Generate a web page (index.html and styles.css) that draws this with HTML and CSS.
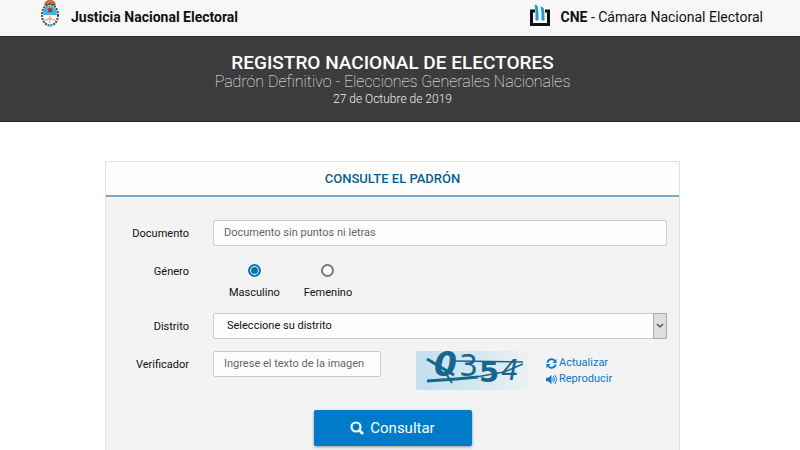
FILE: index.html
```
<!DOCTYPE html>
<html lang="es">

<head>
    <meta charset="UTF-8">
    <meta name="viewport" content="width=device-width, initial-scale=1.0">
    <title>Registro Nacional de Electores</title>
    <link rel="stylesheet" href="styles.css">
</head>

<body>
    <header class="topbar">
        <div class="brand">
            <svg class="brand-shield" viewBox="0 0 20 28" aria-hidden="true">
                <path d="M4 5Q5 0 10 0Q15 0 16 5Q10 8 4 5Z" fill="#b5673a" />
                <path d="M7 4L10 1L13 4" fill="none" stroke="#e0914e" />
                <ellipse cx="10" cy="15" rx="8" ry="10.500" fill="#fff" stroke="#4c4331" stroke-width="2" stroke-dasharray="2 1" />
                <path d="M3 15Q3 6 10 6Q17 6 17 15Z" fill="#3fb1ea" />
                <path d="M10 14V23M4 20Q8 20 10 18Q12 20 16 20" fill="none" stroke="#efb097" stroke-width="1.500" />
                <path d="M8 12V9Q8 8 10 8Q12 8 12 9V12Z" fill="#d8242c" />
                <path d="M8 26L10 25L12 26" fill="none" stroke="#57b8e8" stroke-width="2" />
            </svg>
            <strong>Justicia Nacional Electoral</strong>
        </div>
        <div class="brand">
            <svg class="brand-cne" viewBox="0 0 20 22" aria-hidden="true">
                <path d="M5 7H1.500V20.500H18.500V7H15" fill="none" stroke="#111" stroke-width="3" />
                <path d="M5 1L7 2Q8 4 8 16H6V6Z" fill="#1d9ad6" stroke="#1d9ad6" />
                <path d="M11 3L13 4Q14 6 14 16H12V8Z" fill="#1d9ad6" stroke="#1d9ad6" />
            </svg>
            <span><strong>CNE</strong> - Cámara Nacional Electoral</span>
        </div>
    </header>

    <div class="banner">
        <h1>REGISTRO NACIONAL DE ELECTORES</h1>
        <p class="banner-subtitle">Padrón Definitivo - Elecciones Generales Nacionales</p>
        <p class="banner-date">27 de Octubre de 2019</p>
    </div>

    <main class="content">
        <section class="card">
            <h2 class="card-title">CONSULTE EL PADRÓN</h2>
            <form class="form">
                <label class="form-label" for="documento">Documento</label>
                <input type="text" class="field" id="documento" placeholder="Documento sin puntos ni letras">

                <span class="form-label" id="generoLabel">Género</span>
                <div class="genders" role="radiogroup" aria-labelledby="generoLabel">
                    <label class="gender">
                        <input type="radio" name="genero" value="M" checked>
                        Masculino
                    </label>
                    <label class="gender">
                        <input type="radio" name="genero" value="F">
                        Femenino
                    </label>
                </div>

                <label class="form-label" for="distrito">Distrito</label>
                <div class="select">
                    <select class="field" id="distrito">
                        <option>Seleccione su distrito</option>
                    </select>
                    <span class="select-arrow">
                        <svg viewBox="0 0 8 6" aria-hidden="true">
                            <path d="M1 1L4 4L7 1" fill="none" stroke="#444" stroke-width="1.200" />
                        </svg>
                    </span>
                </div>

                <label class="form-label" for="verificador">Verificador</label>
                <div class="verify">
                    <input type="text" class="field" id="verificador" placeholder="Ingrese el texto de la imagen">
                    <svg class="captcha" viewBox="0 0 120 39" role="img">
                        <defs>
                            <linearGradient id="captchaBg">
                                <stop offset="0" stop-color="#c3e0ed" />
                                <stop offset="0.500" stop-color="#d3e7f0" />
                                <stop offset="1" stop-color="#f3f3f3" />
                            </linearGradient>
                        </defs>
                        <rect width="120" height="39" rx="2" fill="url(#captchaBg)" />
                        <g class="captcha-text">
                            <text class="captcha-heavy captcha-slant" x="18" y="25" font-size="33">0</text>
                            <text x="43" y="25" font-size="30">3</text>
                            <text class="captcha-heavy" x="63" y="31" font-size="29">5</text>
                            <text class="captcha-slant" x="85" y="29" font-size="28">4</text>
                        </g>
                        <g class="captcha-lines">
                            <path d="M11 8L38 24" stroke-width="3" />
                            <path d="M29 21L36 32" stroke-width="2" />
                            <path d="M11 30L40 28L62 26" stroke-width="3" />
                            <path d="M60 26L88 21L107 13" stroke-width="1.500" />
                            <path d="M38 10L107 11" stroke-width="1.500" />
                        </g>
                    </svg>
                    <div class="verify-links">
                        <a href="#">
                            <svg viewBox="0 0 12 12" aria-hidden="true">
                                <path d="M1.500 5A4.500 4.500 0 0 1 9.500 3M10.500 7A4.500 4.500 0 0 1 2.500 9" fill="none" stroke="currentColor" stroke-width="2" />
                                <path d="M11.500 1V5.500H7ZM0.500 11V6.500H5Z" fill="currentColor" />
                            </svg>
                            Actualizar
                        </a>
                        <a href="#">
                            <svg viewBox="0 0 12 12" aria-hidden="true">
                                <path d="M0 4H2.500L6 1V11L2.500 8H0Z" fill="currentColor" />
                                <path d="M7 4.500Q8.500 6 7 7.500M8 2.500Q11 6 8 9.500M9.500 1Q13.500 6 9.500 11" fill="none" stroke="currentColor" />
                            </svg>
                            Reproducir
                        </a>
                    </div>
                </div>

                <button type="submit" class="submit">
                    <svg viewBox="0 0 14 14" aria-hidden="true">
                        <circle cx="6" cy="6" r="4.500" fill="none" stroke="currentColor" stroke-width="2.200" />
                        <path d="M9 9L13 13" stroke="currentColor" stroke-width="2.600" />
                    </svg>
                    Consultar
                </button>
            </form>
        </section>
    </main>
</body>

</html>
```
FILE: styles.css
```
* {
    box-sizing: border-box;
}

body {
    display: flex;
    flex-direction: column;
    min-height: 100vh;
    margin: 0;
    font-family: Roboto, Arial, sans-serif;
    font-size: 11px;
    line-height: 16px;
    color: #111;
    background: #fff;
}

.topbar {
    display: flex;
    justify-content: space-between;
    padding: 0 37px 0 40px;
    font-size: 14px;
    background: #f7f7f7;
}

.brand {
    display: flex;
    align-items: center;
    gap: 11px;
    height: 34px;
    margin-bottom: 2px;
}

.brand strong {
    font-weight: 700;
}

.brand-shield {
    width: 20px;
    height: 28px;
    margin-bottom: 6px;
}

.brand-cne {
    width: 20px;
    height: 22px;
    margin-bottom: 4px;
}

.banner {
    padding: 16px 15px 14px 0;
    border-top: 1px solid #2b2b2b;
    border-bottom: 1px solid #222;
    color: #fff;
    text-align: center;
    background: #3c3c3c;
}

.banner h1 {
    margin: 0;
    font-size: 19px;
    font-weight: 500;
    line-height: 20px;
}

.banner p {
    margin: 0;
    font-weight: 300;
    color: #eee;
}

.banner .banner-subtitle {
    font-size: 16px;
    font-weight: 100;
    line-height: 18px;
    color: #fff;
}

.banner-date {
    font-size: 12px;
    line-height: 16px;
}

.content {
    display: flex;
    flex: 1;
    padding: 39px 120px 0 105px;
}

.card {
    flex: 1;
    border: 1px solid #e2e2e2;
    border-bottom: none;
    background: #f3f3f3;
}

.card-title {
    margin: 0;
    padding: 9px 0 8px;
    border-bottom: 2px solid #79abcb;
    color: #06608e;
    font-size: 13px;
    font-weight: 500;
    line-height: 16px;
    text-align: center;
    background: #fdfdfd;
}

.form {
    display: grid;
    grid-template-columns: 71px 1fr;
    column-gap: 24px;
    row-gap: 12px;
    padding: 23px 12px 0;
}

.form-label {
    padding-top: 6px;
    text-align: right;
}

.field {
    width: 100%;
    height: 26px;
    padding: 0 10px 2px;
    border: 1px solid #ccc;
    border-radius: 2px;
    color: #111;
    font-family: inherit;
    font-size: 11px;
    background: #fdfdfd;
}

.field::placeholder {
    color: #666;
}

.genders {
    display: flex;
    gap: 24px;
    height: 43px;
    padding: 6px 0 0 16px;
}

.gender {
    display: flex;
    flex-direction: column;
    align-items: center;
    gap: 8px;
}

.gender input {
    appearance: none;
    width: 13px;
    height: 13px;
    margin: 0;
    border: 2px solid #777;
    border-radius: 50%;
    background: #fff;
}

.gender input:checked {
    border-color: #0877c2;
    background: #0877a8;
    box-shadow: inset 0 0 0 1px #fff;
}

.select {
    position: relative;
}

.select .field {
    display: block;
    appearance: none;
    padding-left: 13px;
}

.select-arrow {
    position: absolute;
    top: 0;
    right: 0;
    bottom: 0;
    display: flex;
    align-items: center;
    justify-content: center;
    width: 14px;
    border: 1px solid #aaa;
    background: #dedede;
    pointer-events: none;
}

.select-arrow svg {
    width: 8px;
    height: 6px;
}

.verify {
    display: flex;
    align-items: flex-start;
}

.verify .field {
    width: 168px;
}

.captcha {
    width: 120px;
    height: 39px;
    margin: 0 10px 0 35px;
    overflow: visible;
}

.captcha-text {
    fill: #17678d;
    font-family: "DejaVu Sans", sans-serif;
    font-weight: 400;
}

.captcha-heavy {
    font-weight: 700;
}

.captcha-slant {
    font-style: italic;
}

.captcha-lines {
    fill: none;
    stroke: #17678d;
}

.verify-links {
    display: flex;
    flex-direction: column;
    padding-top: 4px;
}

.verify-links a {
    display: flex;
    align-items: center;
    gap: 2px;
    color: #0b75c9;
    text-decoration: none;
}

.verify-links svg {
    width: 11px;
    height: 11px;
}

.submit {
    display: flex;
    grid-column: 1 / -1;
    align-items: center;
    justify-content: center;
    gap: 6px;
    width: 158px;
    height: 36px;
    margin: 8px auto 0;
    border: none;
    border-radius: 2px;
    color: #fff;
    font-family: inherit;
    font-size: 15px;
    background: #007bca;
    box-shadow: 0 1px 3px rgba(0, 0, 0, 0.4);
    cursor: pointer;
}

.submit svg {
    width: 14px;
    height: 14px;
}
```
